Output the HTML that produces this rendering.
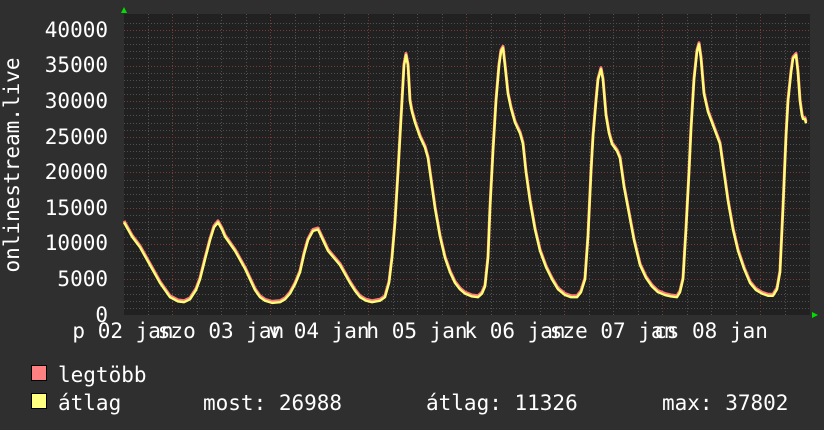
<!DOCTYPE html>
<html><head><meta charset="utf-8"><style>
html,body{margin:0;padding:0;background:#2f2f2f;}
svg{display:block;font-family:"DejaVu Sans Mono","Liberation Mono",monospace;}
</style></head><body>
<svg width="824" height="430" viewBox="0 0 824 430" xmlns="http://www.w3.org/2000/svg">
<defs>
<polyline id="c" fill="none" stroke-linejoin="round" vector-effect="non-scaling-stroke" points="124,13 132,11 140,9.5 150,7 160,4.5 170,2.5 178,1.9 184,1.8 190,2.2 196,3.5 200,5 205,7.8 210,10.5 214,12.3 218,13 222,12 225,11 235,9 245,6.5 255,3.5 260,2.5 265,2 272,1.7 280,1.8 285,2.2 290,3 295,4.3 300,6 304,8.5 308,10.5 313,11.8 318,12 323,10.5 328,9 340,7 350,4.5 355,3.4 360,2.5 366,2 372,1.8 380,2 385,2.5 389,4.5 392,8 395,13 398,20 400,25 402,30 404,35 406,36.5 408,35 410,30 412,28.5 415,27 420,25 425,23.5 428,22 431,19 435,15 440,11 445,8 450,6 455,4.5 460,3.6 465,3 472,2.6 478,2.5 482,3 485,4 488,8 490,15 493,23 496,30 499,35 501,37 503,37.5 505,35 508,31 511,29 515,27 520,25.5 523,24 526,20 530,16 535,12 540,9 546,6.7 552,5 558,3.6 565,2.8 571,2.5 577,2.5 581,3.2 585,5 588,11 591,20 593,25 596,30 598,33 601,34.5 603,33 606,28 609,25.5 612,24 617,23 620,22 624,18 628,15 634,10.5 640,7 646,5.2 652,4 658,3.2 665,2.8 671,2.6 677,2.5 680,3.2 683,5 686,12 689,20 691,26 694,33 697,37 699,38 701,36 704,31 708,28.5 712,27 716,25.5 720,24 724,20 728,16 733,12 738,9 744,6.5 750,4.5 756,3.5 762,3 768,2.7 773,2.7 777,3.6 780,6 783,15 786,25 788,30 791,34 793,36 796,36.5 798,34 800,30 802,28 803,27.5 805,27.5 806,26.9"/>
</defs>
<rect width="824" height="430" fill="#2f2f2f"/>
<rect x="124" y="14" width="686" height="301" fill="#212121"/>
<path fill="none" stroke="#505050" stroke-width="1" stroke-dasharray="1,2" d="M124,308.5H810M124,301.5H810M124,294.5H810M124,286.5H810M124,272.5H810M124,265.5H810M124,258.5H810M124,251.5H810M124,237.5H810M124,229.5H810M124,222.5H810M124,215.5H810M124,201.5H810M124,194.5H810M124,187.5H810M124,180.5H810M124,165.5H810M124,158.5H810M124,151.5H810M124,144.5H810M124,130.5H810M124,123.5H810M124,115.5H810M124,108.5H810M124,94.5H810M124,87.5H810M124,80.5H810M124,73.5H810M124,58.5H810M124,51.5H810M124,44.5H810M124,37.5H810M124,23.5H810
M148.5,14V315M197.5,14V315M221.5,14V315M246.5,14V315M295.5,14V315M319.5,14V315M344.5,14V315M393.5,14V315M417.5,14V315M442.5,14V315M491.5,14V315M515.5,14V315M540.5,14V315M589.5,14V315M613.5,14V315M638.5,14V315M687.5,14V315M711.5,14V315M736.5,14V315M785.5,14V315"/>
<path fill="none" stroke="#7a3a3a" stroke-width="1" stroke-dasharray="1,2" d="M124,279.5H810M124,244.5H810M124,208.5H810M124,172.5H810M124,137.5H810M124,101.5H810M124,66.5H810M124,30.5H810M172.5,14V315M270.5,14V315M368.5,14V315M466.5,14V315M564.5,14V315M662.5,14V315M760.5,14V315"/>
<g transform="translate(0,313.5) scale(1,-7.125)"><use href="#c" stroke="#ff7b7b" stroke-width="3"/></g>
<g transform="translate(0,315) scale(1,-7.125)"><use href="#c" stroke="#ffff77" stroke-width="2.4"/></g>
<polygon points="121,13 127,13 124,7" fill="#00e000"/>
<polygon points="812,312 812,318 818,315" fill="#00e000"/>
<g fill="#ffffff" font-size="21" text-anchor="end">
<text x="108" y="37">40000</text>
<text x="108" y="72">35000</text>
<text x="108" y="108">30000</text>
<text x="108" y="144">25000</text>
<text x="108" y="179">20000</text>
<text x="108" y="215">15000</text>
<text x="108" y="250">10000</text>
<text x="108" y="286">5000</text>
<text x="108" y="322">0</text>
</g>
<text transform="translate(19,165) rotate(-90)" fill="#fff" font-size="21" text-anchor="middle">onlinestream.live</text>
<g fill="#ffffff" font-size="21" text-anchor="middle">
<text x="123" y="338">p 02 jan</text>
<text x="221" y="338">szo 03 jan</text>
<text x="319" y="338">v 04 jan</text>
<text x="417" y="338">h 05 jan</text>
<text x="515" y="338">k 06 jan</text>
<text x="613" y="338">sze 07 jan</text>
<text x="711" y="338">cs 08 jan</text>
</g>
<rect x="31.5" y="365.5" width="15" height="15" fill="#ff8080" stroke="#000"/>
<rect x="31.5" y="393.5" width="15" height="15" fill="#ffff80" stroke="#000"/>
<g fill="#ffffff" font-size="21">
<text x="58" y="382">legtöbb</text>
<text x="58" y="410">átlag</text>
<text x="203" y="410">most: 26988</text>
<text x="426" y="410">átlag: 11326</text>
<text x="662" y="410">max: 37802</text>
</g>
</svg>
</body></html>
